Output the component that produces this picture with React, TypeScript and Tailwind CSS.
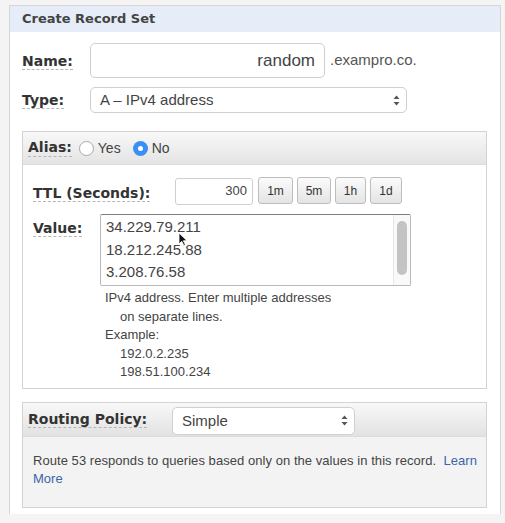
import React from "react";

const Arrows = () => (
  <svg width="7" height="11" viewBox="0 0 7 11">
    <path d="M3.5 0.5 L6.5 4 L0.5 4 Z" fill="#555" />
    <path d="M3.5 10.5 L6.5 7 L0.5 7 Z" fill="#555" />
  </svg>
);

const Label = ({ children }: { children: React.ReactNode }) => (
  <span className="font-['DejaVu_Sans',sans-serif] font-bold text-[14px] leading-[17px] text-[#333] border-b border-dashed border-[#b5b5b5]">
    {children}
  </span>
);

const TtlBtn = ({ t, w }: { t: string; w: string }) => (
  <div
    className={`${w} h-[27px] flex items-center justify-center rounded-[3px] border border-[#bdbdbd] bg-gradient-to-b from-[#fbfbfb] to-[#e4e4e4] text-[12px] text-[#333]`}
  >
    {t}
  </div>
);

export default function App() {
  return (
    <div className="w-[505px] h-[523px] bg-[#f4f4f4] pt-[5px] pl-[9px] font-['Liberation_Sans',Arial,sans-serif] overflow-hidden">
      <div className="w-[492px] h-[509px] bg-white border border-[#d6d6d6] border-b-0">
        <div className="h-[26px] bg-[#e7edf8] flex items-center pl-[12px] font-['DejaVu_Sans',sans-serif] font-bold text-[13px] text-[#444]">
          Create Record Set
        </div>
        <div className="pl-[12px] pr-[13px]">
          {/* Name */}
          <div className="flex items-center mt-[11px] h-[35px]">
            <div className="w-[68px]">
              <Label>Name:</Label>
            </div>
            <div className="w-[235px] h-[35px] rounded-[5px] border border-[#cfcfcf] flex items-center justify-end pr-[9px] text-[17px] text-[#444]">
              random
            </div>
            <span className="ml-[5px] text-[15px] text-[#555]">.exampro.co.</span>
          </div>
          {/* Type */}
          <div className="flex items-center mt-[9px] h-[26px]">
            <div className="w-[68px]">
              <Label>Type:</Label>
            </div>
            <div className="w-[317px] h-[26px] rounded-[5px] border border-[#cfcfcf] flex items-center justify-between pl-[9px] pr-[6px] text-[15px] text-[#444]">
              <span>A – IPv4 address</span>
              <Arrows />
            </div>
          </div>
          {/* Alias panel */}
          <div className="mt-[18px] border border-[#d3d3d3]">
            <div className="h-[33px] bg-gradient-to-b from-[#f8f8f8] to-[#e4e4e4] border-b border-[#dcdcdc] flex items-center pl-[5px]">
              <Label>Alias:</Label>
              <span className="ml-[7px] w-[15px] h-[15px] rounded-full border border-[#a8a8a8] bg-white" />
              <span className="ml-[4px] text-[14px] text-[#444]">Yes</span>
              <span className="ml-[12px] w-[15px] h-[15px] rounded-full bg-[#3b8ef2] flex items-center justify-center">
                <span className="w-[5px] h-[5px] rounded-full bg-white" />
              </span>
              <span className="ml-[4px] text-[14px] text-[#444]">No</span>
            </div>
            <div className="relative pl-[10px] pb-[6px]">
              {/* TTL */}
              <div className="flex items-center mt-[12px] h-[28px]">
                <div className="w-[142px] pt-[3px]">
                  <Label>TTL (Seconds):</Label>
                </div>
                <div className="w-[78px] h-[27px] rounded-[3px] border border-[#cfcfcf] flex items-center justify-end pr-[5px] text-[13px] text-[#444]">
                  300
                </div>
                <div className="flex gap-[4px] ml-[5px] -mt-[1px]">
                  <TtlBtn t="1m" w="w-[35px]" />
                  <TtlBtn t="5m" w="w-[34px]" />
                  <TtlBtn t="1h" w="w-[31px]" />
                  <TtlBtn t="1d" w="w-[32px]" />
                </div>
              </div>
              {/* Value */}
              <div className="flex mt-[9px]">
                <div className="w-[67px] pt-[2px]">
                  <Label>Value:</Label>
                </div>
                <div>
                  <div className="w-[311px] h-[72px] border border-[#b9b9b9] border-t-[#7d7d7d] rounded-[2px] flex">
                    <div className="flex-1 pl-[5px] pt-[1px] text-[15px] leading-[22.5px] text-[#444]">
                      <div>34.229.79.211</div>
                      <div>18.212.245.88</div>
                      <div>3.208.76.58</div>
                    </div>
                    <div className="w-[17px] bg-[#f9f9f9] border-l border-[#e6e6e6] flex justify-center pt-[6px]">
                      <div className="w-[10px] h-[54px] rounded-full bg-[#c3c3c3]" />
                    </div>
                  </div>
                  <div className="pl-[5px] pt-[3px] text-[13px] leading-[18.6px] text-[#444]">
                    <div>IPv4 address. Enter multiple addresses</div>
                    <div className="pl-[15px]">on separate lines.</div>
                    <div>Example:</div>
                    <div className="pl-[15px]">192.0.2.235</div>
                    <div className="pl-[15px]">198.51.100.234</div>
                  </div>
                </div>
              </div>
              {/* mouse cursor */}
              <svg
                className="absolute left-[155px] top-[55px]"
                width="10"
                height="14"
                viewBox="0 0 10 14"
              >
                <path d="M1 1 L1 12 L3.8 9.3 L5.8 13.5 L7.4 12.8 L5.4 8.7 L9 8.7 Z" fill="#111" stroke="#fff" strokeWidth="0.8" />
              </svg>
            </div>
          </div>
          {/* Routing panel */}
          <div className="mt-[13px] border border-[#d3d3d3]">
            <div className="h-[34px] bg-gradient-to-b from-[#f8f8f8] to-[#e2e2e2] border-b border-[#dcdcdc] flex items-center pl-[5px] pt-[3px]">
              <div className="w-[144px] -mt-[3px]">
                <Label>Routing Policy:</Label>
              </div>
              <div className="w-[183px] h-[28px] rounded-[5px] border border-[#d0d0d0] bg-white flex items-center justify-between pl-[9px] pr-[6px] text-[15px] text-[#444]">
                <span>Simple</span>
                <Arrows />
              </div>
            </div>
            <div className="bg-[#f3f3f3] h-[70px] pl-[10px] pt-[15px] text-[13px] leading-[18px] text-[#444]">
              <div className="whitespace-nowrap tracking-[0.05px]">
                Route 53 responds to queries based only on the values in this record.&nbsp;{" "}
                <span className="text-[#3a66a8]">Learn</span>
              </div>
              <div className="text-[#3a66a8]">More</div>
            </div>
          </div>
        </div>
      </div>
    </div>
  );
}
